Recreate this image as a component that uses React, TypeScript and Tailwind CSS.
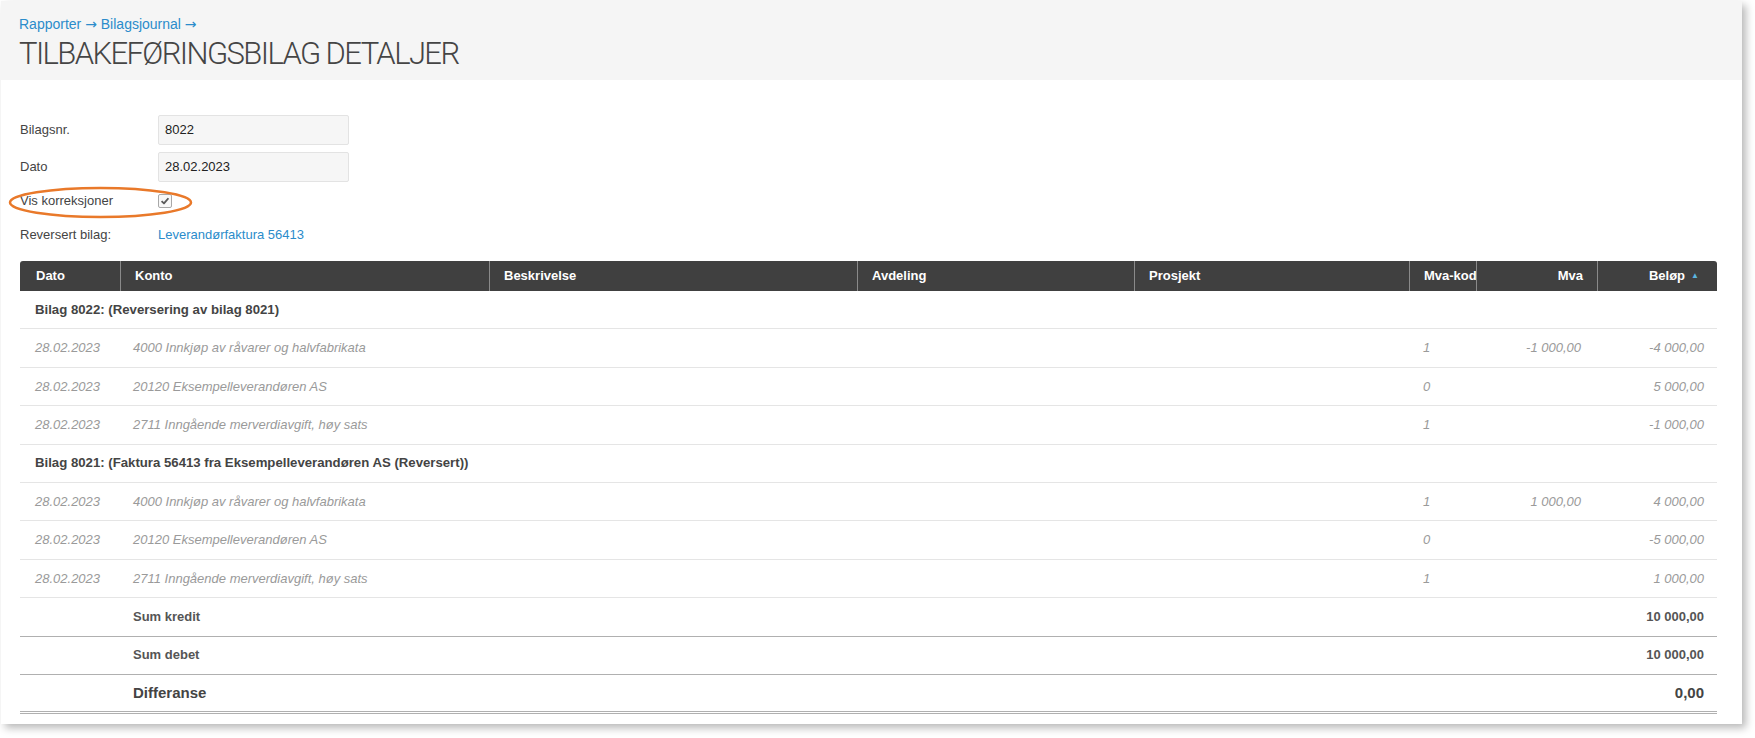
const COLS = 'grid grid-cols-[100px_369px_368px_277px_275px_67px_121px_120px]';

interface Linje {
  dato: string;
  konto: string;
  kode: string;
  mva?: string;
  belop: string;
}

interface Bilag {
  tittel: string;
  linjer: Linje[];
}

const BILAG: Bilag[] = [
  {
    tittel: 'Bilag 8022: (Reversering av bilag 8021)',
    linjer: [
      { dato: '28.02.2023', konto: '4000 Innkjøp av råvarer og halvfabrikata', kode: '1', mva: '-1 000,00', belop: '-4 000,00' },
      { dato: '28.02.2023', konto: '20120 Eksempelleverandøren AS', kode: '0', belop: '5 000,00' },
      { dato: '28.02.2023', konto: '2711 Inngående merverdiavgift, høy sats', kode: '1', belop: '-1 000,00' },
    ],
  },
  {
    tittel: 'Bilag 8021: (Faktura 56413 fra Eksempelleverandøren AS (Reversert))',
    linjer: [
      { dato: '28.02.2023', konto: '4000 Innkjøp av råvarer og halvfabrikata', kode: '1', mva: '1 000,00', belop: '4 000,00' },
      { dato: '28.02.2023', konto: '20120 Eksempelleverandøren AS', kode: '0', belop: '-5 000,00' },
      { dato: '28.02.2023', konto: '2711 Inngående merverdiavgift, høy sats', kode: '1', belop: '1 000,00' },
    ],
  },
];

function HeaderCell({ children, className = '' }: { children?: React.ReactNode; className?: string }) {
  return (
    <div className={`flex items-center border-l border-[#8a8a8a] px-[14px] overflow-hidden whitespace-nowrap ${className}`}>
      {children}
    </div>
  );
}

function FormRow({ label, children, className = '' }: { label: string; children: React.ReactNode; className?: string }) {
  return (
    <div className={`flex items-center h-[30px] ${className}`}>
      <span className="w-[138px] text-[13px] text-[#444]">{label}</span>
      {children}
    </div>
  );
}

function Pil() {
  return <span className="font-['DejaVu_Sans',sans-serif] text-[14px]">→</span>;
}

export default function App() {
  return (
    <div className="min-h-screen bg-white font-['Liberation_Sans',Arial,sans-serif]">
      <div className="relative ml-px mt-px w-[1741px] h-[723px] bg-white shadow-[4px_4px_8px_rgba(0,0,0,0.28)]">
        <header className="h-[79px] bg-[#f5f5f5] pl-[18px] pt-[14px]">
          <div className="text-[14px] leading-[18px] text-[#2b8ccb]">
            Rapporter <Pil /> Bilagsjournal <Pil />
          </div>
          <h1 className="mt-[3px] font-['Roboto',sans-serif] font-light text-[31px] leading-[36px] tracking-[-1.6px] text-[#454545]">
            TILBAKEFØRINGSBILAG DETALJER
          </h1>
        </header>

        <div className="pl-[19px] pt-[35px]">
          <FormRow label="Bilagsnr.">
            <div className="flex items-center w-[191px] h-[30px] rounded-[2px] border border-[#e3e3e3] bg-[#f6f6f6] pl-[6px] text-[13px] text-[#222]">
              8022
            </div>
          </FormRow>
          <FormRow label="Dato" className="mt-[7px]">
            <div className="flex items-center w-[191px] h-[30px] rounded-[2px] border border-[#e3e3e3] bg-[#f6f6f6] pl-[6px] text-[13px] text-[#222]">
              28.02.2023
            </div>
          </FormRow>
          <FormRow label="Vis korreksjoner" className="mt-[4px]">
            <span className="flex items-center justify-center w-[14px] h-[14px] rounded-[2px] border border-[#a8a8a8] bg-[#f8f8f8]">
              <svg viewBox="0 0 14 14" className="w-[12px] h-[12px]">
                <path d="M3 7.2 L5.8 9.8 L11 3.8" fill="none" stroke="#5a5a5a" strokeWidth="2.2" strokeLinejoin="round" />
              </svg>
            </span>
          </FormRow>
          <FormRow label="Reversert bilag:" className="mt-[4px]">
            <span className="text-[13px] text-[#2b8ccb]">Leverandørfaktura 56413</span>
          </FormRow>

          <div className="mt-[11px] w-[1697px] text-[13px]">
            <div className={`${COLS} h-[30px] rounded-t-[3px] bg-[#404040] font-bold text-white`}>
              <div className="flex items-center pl-[16px]">Dato</div>
              <HeaderCell>Konto</HeaderCell>
              <HeaderCell>Beskrivelse</HeaderCell>
              <HeaderCell>Avdeling</HeaderCell>
              <HeaderCell>Prosjekt</HeaderCell>
              <HeaderCell>Mva-kode</HeaderCell>
              <HeaderCell className="justify-end">Mva</HeaderCell>
              <HeaderCell className="justify-end pr-[18px]">
                Beløp <span className="ml-[6px] text-[8px] text-[#5bb5e0]">▲</span>
              </HeaderCell>
            </div>

            {BILAG.map((b) => (
              <div key={b.tittel}>
                <div className="flex items-center h-[38.4px] border-b border-[#e5e5e5] pl-[15px] font-bold text-[13.2px] text-[#444]">
                  {b.tittel}
                </div>
                {b.linjer.map((l, i) => (
                  <div key={i} className={`${COLS} h-[38.4px] border-b border-[#e5e5e5] italic text-[#9a9a9a]`}>
                    <div className="flex items-center pl-[15px]">{l.dato}</div>
                    <div className="flex items-center pl-[13px] whitespace-nowrap">{l.konto}</div>
                    <div />
                    <div />
                    <div />
                    <div className="flex items-center pl-[14px]">{l.kode}</div>
                    <div className="flex items-center justify-end pr-[16px]">{l.mva}</div>
                    <div className="flex items-center justify-end pr-[13px]">{l.belop}</div>
                  </div>
                ))}
              </div>
            ))}

            <div className={`${COLS} h-[38.4px] border-b border-[#b0b0b0] font-bold text-[#555]`}>
              <div />
              <div className="flex items-center pl-[13px]">Sum kredit</div>
              <div className="col-span-5" />
              <div className="flex items-center justify-end pr-[13px]">10 000,00</div>
            </div>
            <div className={`${COLS} h-[38.4px] border-b border-[#b0b0b0] font-bold text-[#555]`}>
              <div />
              <div className="flex items-center pl-[13px]">Sum debet</div>
              <div className="col-span-5" />
              <div className="flex items-center justify-end pr-[13px]">10 000,00</div>
            </div>
            <div className={`${COLS} h-[39px] border-b-[3px] border-double border-[#b0b0b0] font-bold text-[15px] text-[#444]`}>
              <div />
              <div className="flex items-center pl-[13px]">Differanse</div>
              <div className="col-span-5" />
              <div className="flex items-center justify-end pr-[13px]">0,00</div>
            </div>
          </div>
        </div>

        <svg className="absolute left-[7px] top-[185px] w-[185px] h-[33px] pointer-events-none" viewBox="0 0 185 33">
          <ellipse cx="92.5" cy="16.5" rx="90.5" ry="14.5" fill="none" stroke="#e9792a" strokeWidth="2.5" />
        </svg>
      </div>
    </div>
  );
}
